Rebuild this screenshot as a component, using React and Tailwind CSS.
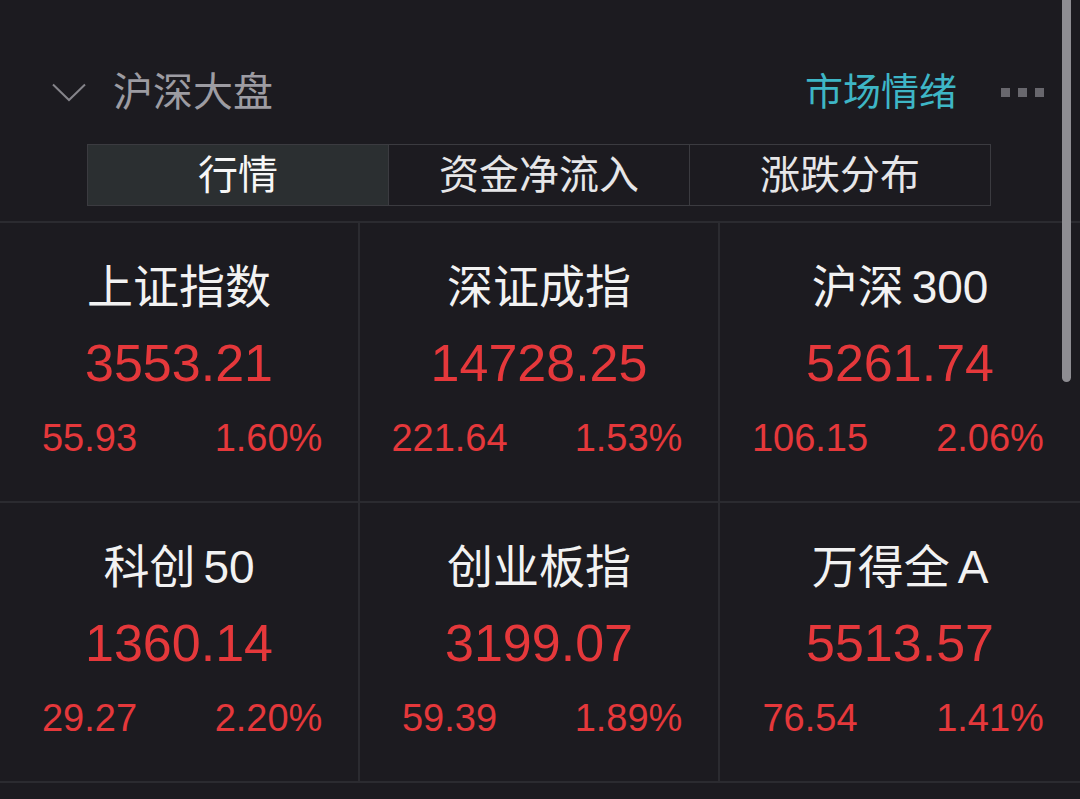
import React from 'react';

const indices = [
  { name: '上证指数', value: '3553.21', change: '55.93', pct: '1.60%' },
  { name: '深证成指', value: '14728.25', change: '221.64', pct: '1.53%' },
  { name: '沪深', suffix: '300', value: '5261.74', change: '106.15', pct: '2.06%' },
  { name: '科创', suffix: '50', value: '1360.14', change: '29.27', pct: '2.20%' },
  { name: '创业板指', value: '3199.07', change: '59.39', pct: '1.89%' },
  { name: '万得全', suffix: 'A', value: '5513.57', change: '76.54', pct: '1.41%' },
];

const tabs = ['行情', '资金净流入', '涨跌分布'];

const IndexCell = ({ item, last }) => (
  <div className={`h-[280px] border-b-2 border-[#2b2b30] flex flex-col items-center pt-[36px] ${last ? '' : 'border-r-2'}`}>
    <div className="text-[46px] leading-[56px] text-[#f2f2f2]">
      {item.name}
      {item.suffix && <span className="ml-[8px]">{item.suffix}</span>}
    </div>
    <div className="mt-[18px] text-[52px] leading-[60px] text-[#e5383b]">{item.value}</div>
    <div className="mt-[23px] w-full grid grid-cols-2 text-[38px] leading-[44px] text-[#e5383b]">
      <span className="text-center">{item.change}</span>
      <span className="text-center">{item.pct}</span>
    </div>
  </div>
);

export default function App() {
  return (
    <div
      className="relative w-[1080px] h-[799px] overflow-hidden bg-[#1c1b20]"
      style={{ fontFamily: '"Liberation Sans", "Noto Sans CJK SC", sans-serif' }}
    >
      {/* Header */}
      <div className="pt-[64px] h-[120px] flex items-center pl-[52px] pr-[36px]">
        <div className="h-[56px] flex items-center flex-1">
          <svg width="34" height="19" viewBox="0 0 34 19" fill="none">
            <polyline points="1,1.5 17,17 33,1.5" stroke="#85848a" strokeWidth="2" />
          </svg>
          <span className="ml-[27px] text-[40px] leading-[56px] text-[#9d9ca2]">沪深大盘</span>
          <span className="ml-auto text-[38px] leading-[56px] text-[#3eb6c6]">市场情绪</span>
          <div className="ml-[44px] flex gap-[8px] mt-[1px]">
            <span className="w-[9px] h-[9px] bg-[#68676d]" />
            <span className="w-[9px] h-[9px] bg-[#68676d]" />
            <span className="w-[9px] h-[9px] bg-[#68676d]" />
          </div>
        </div>
      </div>

      {/* Tabs */}
      <div className="mt-[24px] ml-[87px] w-[904px] h-[62px] flex border border-[#3b3b40]">
        {tabs.map((t, i) => (
          <div
            key={t}
            className={`flex-1 flex items-center justify-center text-[40px] ${
              i === 0 ? 'bg-[#2b2f31] text-[#f7f7f7]' : 'text-[#e6e6e8]'
            } ${i < tabs.length - 1 ? 'border-r border-[#3b3b40]' : ''}`}
          >
            {t}
          </div>
        ))}
      </div>

      {/* Index grid */}
      <div className="mt-[15px] border-t-2 border-[#2b2b30] grid grid-cols-3">
        {indices.map((item, i) => (
          <IndexCell key={item.value} item={item} last={i % 3 === 2} />
        ))}
      </div>

      {/* Scrollbar */}
      <div className="absolute top-0 left-[1062px] w-[9px] h-[382px] rounded-b-full bg-[#8e8d92]" />
    </div>
  );
}
